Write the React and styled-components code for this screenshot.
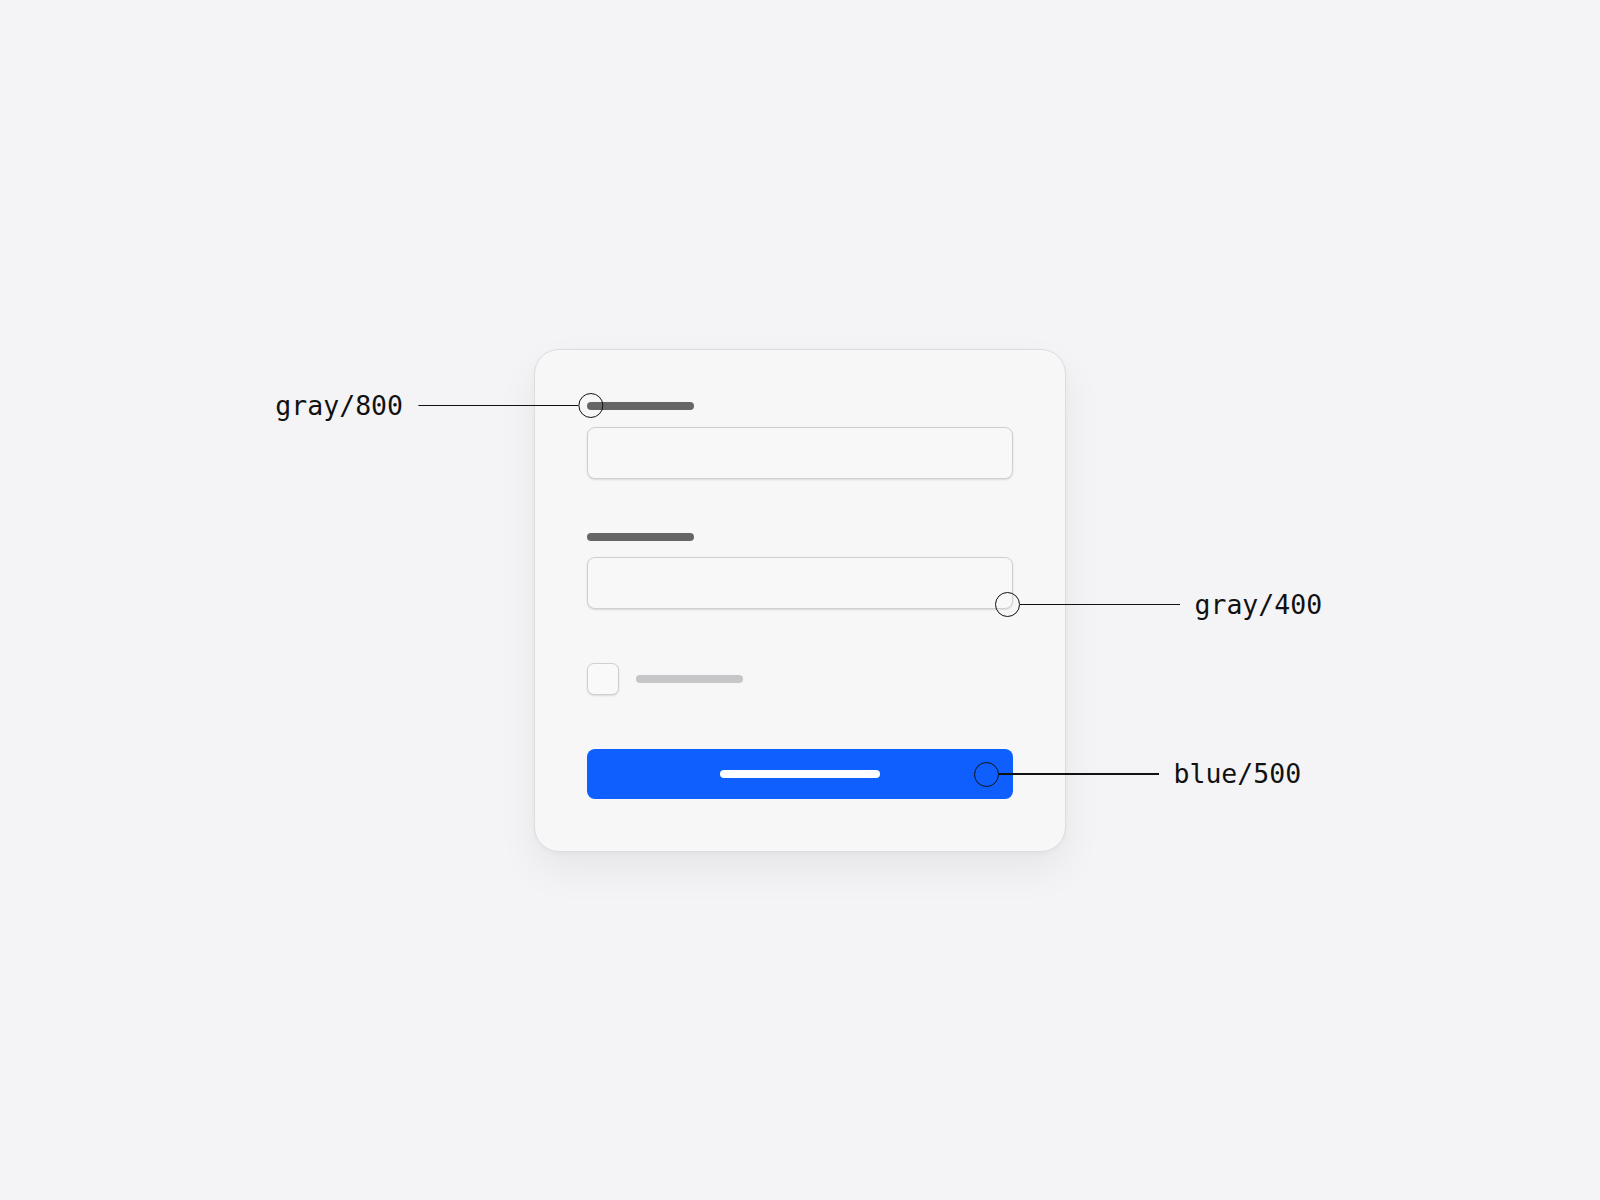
import React from 'react'
import styled, { createGlobalStyle } from 'styled-components'

const GlobalStyle = createGlobalStyle`
  html, body {
    margin: 0;
    padding: 0;
    background: #f4f4f6;
  }
`

const Page = styled.div`
  width: 100%;
  height: 1200px;
  display: flex;
  align-items: center;
  justify-content: center;
  background: #f4f4f6;
`

const Stage = styled.div`
  position: relative;
`

const Card = styled.div`
  width: 426px;
  padding: 52px;
  display: flex;
  flex-direction: column;
  background: #f7f7f8;
  border: 1px solid #dcdcdf;
  border-radius: 25px;
  box-shadow: 0 18px 40px rgba(0, 0, 0, 0.06), 0 2px 6px rgba(0, 0, 0, 0.03);
`

const Field = styled.div`
  display: flex;
  flex-direction: column;
  gap: ${p => p.$gap}px;
  margin-bottom: 54px;
`

const Bar = styled.div`
  width: ${p => p.$w}px;
  height: 8px;
  border-radius: 4px;
  background: ${p => p.$color};
`

const Input = styled.div`
  box-sizing: border-box;
  height: 52px;
  background: #f8f8f9;
  border: 1px solid #cfcfd2;
  border-radius: 8px;
  box-shadow: 0 1px 2px rgba(0, 0, 0, 0.12);
`

const CheckRow = styled.div`
  display: flex;
  align-items: center;
  gap: 17px;
  margin-bottom: 54px;
`

const Checkbox = styled.div`
  box-sizing: border-box;
  width: 32px;
  height: 32px;
  background: #f9f9fa;
  border: 1px solid #cfcfd2;
  border-radius: 7px;
  box-shadow: 0 1px 2px rgba(0, 0, 0, 0.12);
`

const Button = styled.div`
  height: 50px;
  display: flex;
  align-items: center;
  justify-content: center;
  background: #0f5fff;
  border-radius: 8px;
`

// callout: ring sits on the annotated spot, line and tag run outward
const Callout = styled.div`
  position: absolute;
  left: ${p => p.$x}px;
  top: ${p => p.$y}px;
  display: flex;
  flex-direction: ${p => (p.$side === 'left' ? 'row-reverse' : 'row')};
  align-items: center;
  transform: translate(${p => (p.$side === 'left' ? '-100%' : '0')}, -50%);
  margin-left: ${p => (p.$side === 'left' ? '12.5px' : '-12.5px')};
`

const Ring = styled.div`
  box-sizing: border-box;
  width: 25px;
  height: 25px;
  border: 1.5px solid #111;
  border-radius: 50%;
  flex-shrink: 0;
`

const Line = styled.div`
  width: 160px;
  height: 1.5px;
  background: #111;
`

const Tag = styled.span`
  font-family: "DejaVu Sans Mono", "Liberation Mono", monospace;
  font-size: 26.5px;
  line-height: 30px;
  color: #111;
  margin: 0 15px;
  white-space: nowrap;
`

const notes = [
  { x: 56.5, y: 57, side: 'left', label: 'gray/800' },
  { x: 473, y: 256, side: 'right', label: 'gray/400' },
  { x: 452, y: 425.5, side: 'right', label: 'blue/500' },
]

export default function App() {
  return (
    <>
      <GlobalStyle />
      <Page>
        <Stage>
          <Card>
            <Field $gap={17}>
              <Bar $w={107} $color="#666666" />
              <Input />
            </Field>
            <Field $gap={16}>
              <Bar $w={107} $color="#666666" />
              <Input />
            </Field>
            <CheckRow>
              <Checkbox />
              <Bar $w={107} $color="#c6c6c8" />
            </CheckRow>
            <Button>
              <Bar $w={160} $color="#ffffff" />
            </Button>
          </Card>
          {notes.map(n => (
            <Callout key={n.label} $x={n.x} $y={n.y} $side={n.side}>
              <Ring />
              <Line />
              <Tag>{n.label}</Tag>
            </Callout>
          ))}
        </Stage>
      </Page>
    </>
  )
}
